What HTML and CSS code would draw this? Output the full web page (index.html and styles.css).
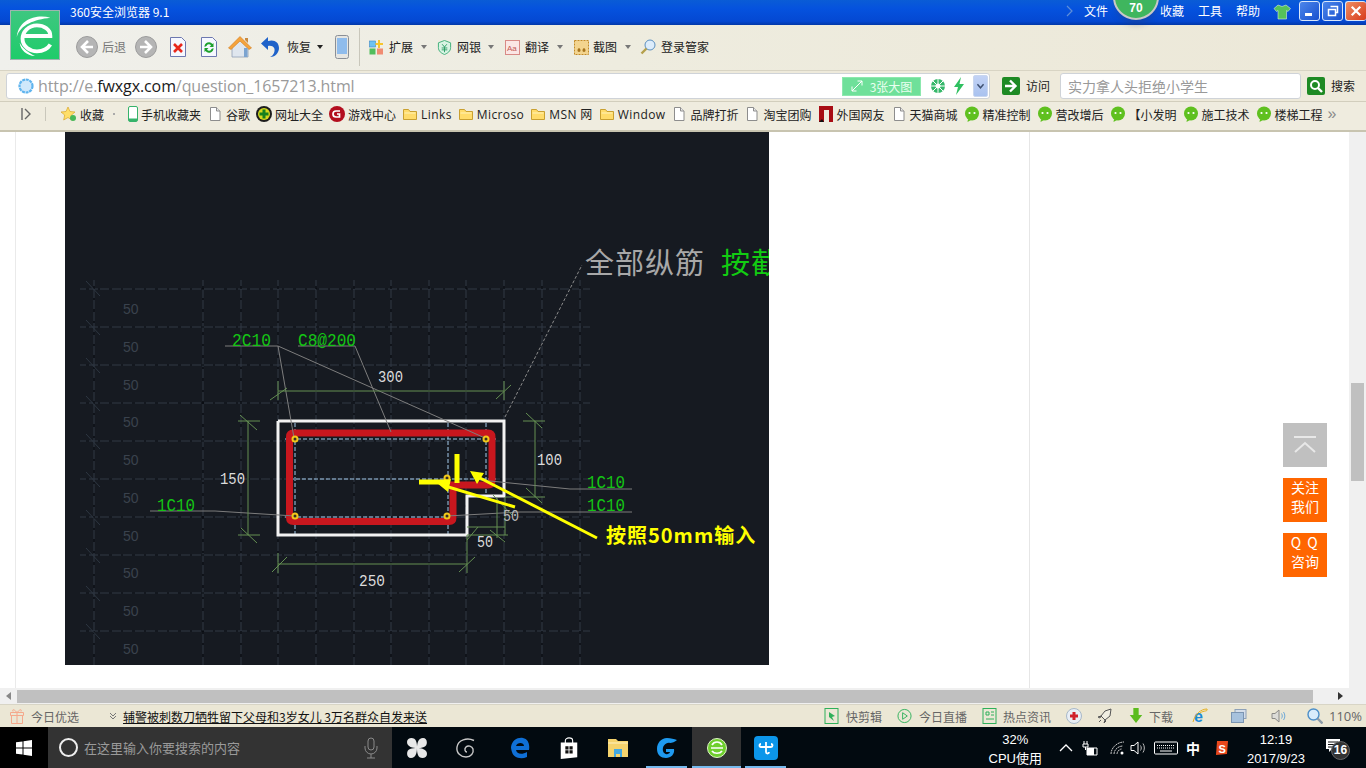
FILE: index.html
```html
<!DOCTYPE html>
<html lang="zh-CN">
<head>
<meta charset="utf-8">
<title>360安全浏览器 9.1</title>
<link rel="stylesheet" href="styles.css">
</head>
<body>
<svg class="sprite" aria-hidden="true">
  <symbol id="doc" viewBox="0 0 16 16"><path d="M3.5 1.500h6l3.500 3.500v9.500h-9.500z" fill="#fff" stroke="#8d8d8d"/><path d="M9.500 1.500v3.500h3.500" fill="#e8e8e8" stroke="#8d8d8d"/></symbol>
  <symbol id="folder" viewBox="0 0 16 16"><path d="M1.500 3.500h5l1.500 2h6.500v8h-13z" fill="#ffdc6b" stroke="#c9a030"/><path d="M2.500 6.500h11v1h-11z" fill="#fff2b8"/></symbol>
  <symbol id="chat" viewBox="0 0 16 16"><circle cx="8" cy="7.500" r="7" fill="#5fc01f"/><path d="M4 13l-.5 3 3.500-2z" fill="#5fc01f"/><circle cx="5.500" cy="7" r="1.100" fill="#fff"/><circle cx="10.500" cy="7" r="1.100" fill="#fff"/></symbol>
  <symbol id="gridlines" viewBox="65 132 704 533">
    <path d="M80 289H590M80 327H590M80 365H590M80 403H590M80 441H590M80 479H590M80 517H590M80 555H590M80 593H590M80 631H590"/>
    <path d="M94 280V665M203 280V665M241 280V665M278 280V665M316 280V665M354 280V665M391 280V665M429 280V665M466 280V665M504 280V665M542 280V665M580 280V665"/>
  </symbol>
</svg>

<div class="browser">
  <header class="titlebar">
    <span class="app-title">360安全浏览器 9.1</span>
    <nav class="menu">
      <svg class="menu-chev" viewBox="0 0 8 12"><path d="M1 1l5 5-5 5" fill="none" stroke="#5f8fd8" stroke-width="1.200"/></svg>
      <span class="menu-file">文件</span>
      <span class="menu-fav">收藏</span>
      <span class="menu-tools">工具</span>
      <span class="menu-help">帮助</span>
      <svg class="shirt" viewBox="0 0 18 16"><path d="M5 1l4 1.500L13 1l4.500 3.500-2.500 3-1.500-1V15H5V6.500L3.500 7.500 1 4.500z" fill="#55c25a" stroke="#d8f0d8" stroke-width=".6"/></svg>
      <span class="win-btn win-min"><i class="min-bar"></i></span>
      <span class="win-btn win-max"><svg viewBox="0 0 12 12"><path d="M3.500 1.500h7v6h-2M1.500 4.500h7v6h-7z" fill="none" stroke="#fff" stroke-width="1.500"/></svg></span>
      <span class="win-btn win-close"><svg viewBox="0 0 14 14"><path d="M2 2l10 10M12 2L2 12" stroke="#fff" stroke-width="2.600"/></svg></span>
    </nav>
  </header>

  <div class="score"><span class="score-num">70</span></div>

  <div class="logo">
    <svg viewBox="0 0 50 50"><path d="M13 26H41C41 19 34 15 27 15 18 15 12 22 12 29 12 37 20 42 27 42 33 42 38 40 41 35" fill="none" stroke="#fff" stroke-width="4"/><path d="M41 7C26 3 8 9 6 27 10 14 24 9 41 7zM9 33C10 41 16 46 25 47 18 43 12 39 9 33z" fill="#fff"/></svg>
  </div>

  <div class="toolbar">
    <svg class="ic22" viewBox="0 0 22 22"><circle cx="11" cy="11" r="10.500" fill="#b5b5b5" stroke="#9c9c9c"/><path d="M12 5l-6 6 6 6M6 11h11" fill="none" stroke="#fff" stroke-width="2.600"/></svg>
    <span class="tb-text muted m4">后退</span>
    <svg class="ic22 m9" viewBox="0 0 22 22"><circle cx="11" cy="11" r="10.500" fill="#b5b5b5" stroke="#9c9c9c"/><path d="M10 5l6 6-6 6M16 11H5" fill="none" stroke="#fff" stroke-width="2.600"/></svg>
    <svg class="ic16x20 m13" viewBox="0 0 16 20"><path d="M.5.500h11l4 4v15H.5z" fill="#f6f8ff" stroke="#6d78b0"/><path d="M4 7l8 8M12 7l-8 8" stroke="#e8281c" stroke-width="2.600"/></svg>
    <svg class="ic16x20 m15" viewBox="0 0 16 20"><path d="M.5.500h11l4 4v15H.5z" fill="#f6f8ff" stroke="#6d78b0"/><path d="M3.500 10a4.500 4.500 0 0 1 8-3l1-1v4h-4l1.500-1.500a2.500 2.500 0 0 0-4.500.5z M12.500 11a4.500 4.500 0 0 1-8 3l-1 1v-4h4L6 12.500a2.500 2.500 0 0 0 4.500-.5z" fill="#1ca02c"/></svg>
    <svg class="ic24 m11" viewBox="0 0 24 24"><path d="M4 12v10h16V12l-8-7z" fill="#dfe6ee" stroke="#8fa0b5" stroke-width=".8"/><path d="M.5 13L12 1.500 23.500 13 21 14.500 12 6 3 14.500z" fill="#f5a33c" stroke="#d07a18" stroke-width=".6"/><path d="M16 13h3.500v9H16z" fill="#7ca4d0"/><path d="M17 3h3v5l-3-3z" fill="#c98a40"/></svg>
    <svg class="ic21 m7" viewBox="0 0 21 22"><path d="M9 1L2 7.500 9 14v-4c5-1 8 2 6 7-1 2-2 3-4 4 6 0 9-5 9-9 0-6-5-9-11-7z" fill="#1f62c9"/></svg>
    <span class="tb-text m7">恢复</span>
    <i class="caret m6"></i>
    <svg class="ic14x24 m12" viewBox="0 0 14 24"><rect x=".5" y=".5" width="13" height="23" rx="2" fill="#e6e6e2" stroke="#8a8f96"/><rect x="2" y="3" width="10" height="16" fill="#8fbcec"/></svg>
    <i class="tb-sep m10"></i>
    <svg class="ic15 m9" viewBox="0 0 15 15"><rect x=".5" y="1" width="6" height="6" fill="#6ec2f2" stroke="#3a87c5" stroke-width=".6"/><path d="M11 0v3h3v2h-3v3H9V5H6.500V3H9V0z" fill="#f7c52d"/><rect x=".5" y="8.500" width="6" height="6" fill="#52bd5c"/><rect x="8" y="8.500" width="6" height="6" fill="#f08c72"/></svg>
    <span class="tb-text m5">扩展</span>
    <i class="caret grey m8"></i>
    <svg class="ic15 m10" viewBox="0 0 15 16"><path d="M7.500.500l6.500 2.500v5c0 4-3 6-6.500 7.500C4 14 1 12 1 8V3z" fill="#d8f3e3" stroke="#3dae77"/><path d="M5 4.500l2.500 3 2.500-3M4.500 8.500h6M4.500 10.500h6M7.500 7.500V13" fill="none" stroke="#2c9d65"/></svg>
    <span class="tb-text m5">网银</span>
    <i class="caret grey m7"></i>
    <svg class="ic15 m11" viewBox="0 0 15 15"><rect x=".5" y=".5" width="14" height="14" fill="#fbe6e4" stroke="#d88a86"/><text class="aa" x="2" y="11">Aa</text></svg>
    <span class="tb-text m5">翻译</span>
    <i class="caret grey m8"></i>
    <svg class="ic15 m11" viewBox="0 0 15 15"><rect x=".5" y=".5" width="14" height="14" fill="#f3d48e" stroke="#c38a24" stroke-dasharray="2 1"/><path d="M5 8c-2 1-2 4 0 4s2-3 0-4zm5 0c-2 1-2 4 0 4s2-3 0-4z" fill="#a7741d"/></svg>
    <span class="tb-text m4">截图</span>
    <i class="caret grey m8"></i>
    <svg class="ic16 m9" viewBox="0 0 16 16"><circle cx="10" cy="6" r="5" fill="#dcecfb" stroke="#5b8fbf"/><path d="M6.500 9.500l-5 5" stroke="#b5a04c" stroke-width="2.400"/></svg>
    <span class="tb-text m5">登录管家</span>
  </div>

  <div class="addrbar">
    <div class="url-box">
      <svg class="ic16" viewBox="0 0 16 16"><circle cx="8" cy="8" r="6.500" fill="#cfe8fb" stroke="#5fb4ee" stroke-width="2.200" stroke-dasharray="3 .7"/></svg>
      <span class="url"><span>http://e.</span><b class="url-host">fwxgx.com</b><span>/question_1657213.html</span></span>
      <span class="big-pic">
        <svg class="ic12" viewBox="0 0 12 12"><path d="M1 11l10-10M6.500 1H11v4.500M1 6.500V11h4.500" fill="none" stroke="#fff"/></svg>
        <span>3张大图</span>
      </span>
      <svg class="ic16 m9" viewBox="0 0 16 16"><circle cx="8" cy="8" r="7" fill="#35b86a"/><circle cx="8" cy="8" r="2.500" fill="#fff"/><path d="M8 1v5M15 8h-5M8 15v-5M1 8h5M3 3l3.500 3.500M13 3L9.500 6.500M13 13L9.500 9.500M3 13l3.500-3.500" stroke="#fff"/></svg>
      <svg class="ic12x18 m7" viewBox="0 0 12 18"><path d="M8 0L1 10h4l-2 8 8-11H6.500z" fill="#2fc060"/></svg>
      <span class="addr-drop"><svg viewBox="0 0 10 8"><path d="M1.500 1.500L5 5.500l3.500-4" fill="none" stroke="#3d4f70" stroke-width="1.600"/></svg></span>
    </div>
    <svg class="go-ic" viewBox="0 0 18 18"><rect width="18" height="18" rx="2" fill="#1e8a24"/><path d="M3 9h9M8 3.500L13.500 9 8 14.500" fill="none" stroke="#fff" stroke-width="2.400"/></svg>
    <span class="tb-text m6">访问</span>
    <span class="search-box">实力拿人头拒绝小学生</span>
    <svg class="go-ic m6" viewBox="0 0 18 18"><rect width="18" height="18" rx="2" fill="#1e8a24"/><circle cx="8" cy="8" r="4" fill="none" stroke="#fff" stroke-width="2"/><path d="M11 11l4 4" stroke="#fff" stroke-width="2.400"/></svg>
    <span class="tb-text m6">搜索</span>
  </div>

  <div class="favbar">
    <svg class="fav-toggle" viewBox="0 0 10 12"><path d="M1 0v12" stroke="#666" stroke-width="1.400"/><path d="M4 1l5 5-5 5" fill="none" stroke="#666" stroke-width="1.400"/></svg>
    <i class="fav-sep"></i>
    <span class="fav fav-star"><svg class="ic16" viewBox="0 0 16 16"><path d="M7 1l2 4.500 5 .5-3.700 3.200 1 5L7 11.500 2.700 14l1-5L0 6l5-.5z" fill="#ffdf6a" stroke="#d9a62a" stroke-width=".7"/><circle cx="12" cy="12" r="3" fill="#48b85a"/></svg>收藏</span>
    <i class="fav-dot"></i>
    <span class="fav fav-phone"><svg class="ic10x16" viewBox="0 0 10 16"><rect x=".5" y=".5" width="9" height="15" rx="1.500" fill="#fff" stroke="#36b36a"/><path d="M1 12.500h8V15H1z" fill="#36b36a"/></svg>手机收藏夹</span>
    <span class="fav"><svg class="ic16"><use href="#doc"/></svg>谷歌</span>
    <span class="fav"><svg class="ic16" viewBox="0 0 16 16"><circle cx="8" cy="8" r="8" fill="#1d1d1d"/><circle cx="8" cy="8" r="6" fill="#d6d81d"/><path d="M6.500 3.500h3v3h3v3h-3v3h-3v-3h-3v-3h3z" fill="#17801e"/></svg>网址大全</span>
    <span class="fav"><svg class="ic16" viewBox="0 0 16 16"><circle cx="8" cy="8" r="8" fill="#b30e1e"/><path d="M11 5H7a3 3 0 0 0 0 6h3.500V8H8" fill="none" stroke="#fff" stroke-width="1.700"/></svg>游戏中心</span>
    <span class="fav fav-latin"><svg class="ic16"><use href="#folder"/></svg>Links</span>
    <span class="fav fav-latin"><svg class="ic16"><use href="#folder"/></svg>Microso</span>
    <span class="fav fav-latin"><svg class="ic16"><use href="#folder"/></svg>MSN 网</span>
    <span class="fav fav-latin"><svg class="ic16"><use href="#folder"/></svg>Window</span>
    <span class="fav"><svg class="ic16"><use href="#doc"/></svg>品牌打折</span>
    <span class="fav"><svg class="ic16"><use href="#doc"/></svg>淘宝团购</span>
    <span class="fav"><svg class="ic16" viewBox="0 0 16 16"><path d="M1 0h14v16h-4V4H6v12H1z" fill="#a80d14"/><path d="M1 16l3-3 2 3z" fill="#111"/></svg>外国网友</span>
    <span class="fav"><svg class="ic16"><use href="#doc"/></svg>天猫商城</span>
    <span class="fav"><svg class="ic16"><use href="#chat"/></svg>精准控制</span>
    <span class="fav"><svg class="ic16"><use href="#chat"/></svg>营改增后</span>
    <span class="fav"><svg class="ic16"><use href="#chat"/></svg>【小发明</span>
    <span class="fav"><svg class="ic16"><use href="#chat"/></svg>施工技术</span>
    <span class="fav"><svg class="ic16"><use href="#chat"/></svg>楼梯工程</span>
    <span class="fav-more">»</span>
  </div>

  <main class="viewport">
    <div class="page">
      <div class="page-main">
        <svg class="cad" viewBox="65 132 704 533" width="704" height="533">
          <use class="grid-base" href="#gridlines" x="65" y="132" width="704" height="533"/>
          <use class="grid-dash" href="#gridlines" x="65" y="132" width="704" height="533"/>
          <path class="grid-tick" d="M86 281L100 296M86 320L100 335M86 358L100 373M86 396L100 411M86 434L100 449M86 472L100 487M86 510L100 525M86 548L100 563M86 586L100 601M86 624L100 639"/>
          <g class="grid-label">
            <text x="123" y="314">50</text><text x="123" y="352">50</text><text x="123" y="390">50</text><text x="123" y="427">50</text><text x="123" y="465">50</text><text x="123" y="503">50</text><text x="123" y="541">50</text><text x="123" y="578">50</text><text x="123" y="616">50</text><text x="123" y="654">50</text>
          </g>

          <path class="leader-dash" d="M505 417L582 265"/>
          <path class="inner-dash" d="M295 423V535M448 423V536M486 423V498M285 439H496M290 479H496M285 517H456"/>

          <polyline class="outline" points="278,421 504,421 504,496 467,496 467,535 278,535 278,421"/>
          <path class="rebar" d="M450 485H488Q492 485 492 481V437Q492 433 488 433H293.500Q289.500 433 289.500 437V517.500Q289.500 521.500 293.500 521.500H449Q453 521.500 453 517.500V485"/>

          <path class="leader" d="M225 346H278L294 438M278 346L485 438M298 346H355L391 432M150 511H215L295 516M632 489H570L480 480M632 512H520L447 516"/>
          <path class="dim" d="M278 391H504M278 381V400M504 381V400M270 400L287 388M496 399L511 385M248 421V535M238 421H260M238 535H260M240 415L257 430M241 528L257 543M278 564H467M278 553V573M467 535V573M272 572L287 557M459 572L475 557M535 421V497M523 421H545M505 497H545M526 413L542 428M526 488L542 503M467 527H505M467 535H508M497 498V538M505 497V535M490 530L505 542M493 495L512 515M467 540L478 527"/>

          <g class="marks">
            <circle cx="295" cy="439" r="2.500"/><circle cx="486" cy="439" r="2.500"/><circle cx="447" cy="478" r="2.500"/><circle cx="447" cy="516" r="2.500"/><circle cx="295" cy="516" r="2.500"/>
          </g>

          <text class="cad-dim" x="378" y="382" textLength="25" lengthAdjust="spacingAndGlyphs">300</text>
          <text class="cad-dim" x="220" y="484" textLength="25" lengthAdjust="spacingAndGlyphs">150</text>
          <text class="cad-dim" x="537" y="465" textLength="25" lengthAdjust="spacingAndGlyphs">100</text>
          <text class="cad-dim" x="359" y="586" textLength="26" lengthAdjust="spacingAndGlyphs">250</text>
          <text class="cad-dim" x="477" y="547" textLength="16" lengthAdjust="spacingAndGlyphs">50</text>
          <text class="cad-dim dim-soft" x="503" y="521" textLength="16" lengthAdjust="spacingAndGlyphs">50</text>
          <text class="cad-green" x="232" y="346" textLength="39" lengthAdjust="spacingAndGlyphs">2C10</text>
          <text class="cad-green" x="298" y="346" textLength="58" lengthAdjust="spacingAndGlyphs">C8@200</text>
          <text class="cad-green" x="157" y="511" textLength="38" lengthAdjust="spacingAndGlyphs">1C10</text>
          <text class="cad-green" x="587" y="488" textLength="38" lengthAdjust="spacingAndGlyphs">1C10</text>
          <text class="cad-green" x="587" y="511" textLength="38" lengthAdjust="spacingAndGlyphs">1C10</text>
          <text class="cad-big" x="585" y="274">全部纵筋</text>
          <text class="cad-big green" x="721" y="274">按截面</text>

          <path class="arrow-bar" d="M457 454V483M419 482H448"/>
          <path class="arrow-line" d="M515 507L445 486M597 538L480 478"/>
          <path class="arrow-head" d="M437 483L451 479 448 492zM470 471L484 473 477 484z"/>
          <text class="cad-note" x="606" y="543">按照50mm输入</text>
        </svg>
      </div>
      <aside class="page-side"></aside>
      <div class="float-rail">
        <span class="float-top"><svg viewBox="0 0 24 18"><path d="M1 1h22M2 16l10-9 10 9" fill="none" stroke="#e8e8e8" stroke-width="2"/></svg></span>
        <span class="float-btn">关注<br>我们</span>
        <span class="float-btn"><span class="float-qq">Q Q</span><br>咨询</span>
      </div>
    </div>
    <div class="vscroll"><i class="vthumb"></i></div>
  </main>

  <div class="hscroll">
    <svg class="harrow" viewBox="0 0 5 8"><path d="M5 0v8L0 4z" fill="#888"/></svg>
    <i class="hthumb"></i>
    <svg class="harrow" viewBox="0 0 5 8"><path d="M0 0v8l5-4z" fill="#333"/></svg>
  </div>

  <footer class="statusbar">
    <svg class="ic16 st-gift" viewBox="0 0 16 16"><path d="M1.500 4.500h13v3h-13zM2.500 7.500h11v8h-11zM8 4.500v11M8 4.500C5 1 3 1 4 3.500M8 4.500c3-3.500 5-3.500 4-1" fill="none" stroke="#f5a88c"/></svg>
    <span class="st-text m6">今日优选</span>
    <svg class="st-chev" viewBox="0 0 8 8"><path d="M1 1l3 3 3-3M1 4l3 3 3-3" fill="none" stroke="#777"/></svg>
    <a class="news">辅警被刺数刀牺牲留下父母和3岁女儿 3万名群众自发来送</a>
    <span class="st-spacer"></span>
    <svg class="ic14" viewBox="0 0 15 16"><rect x="1" y=".5" width="13" height="15" fill="none" stroke="#2eb05a"/><path d="M5 4l6 4-3 1 2 4-5-4z" fill="#2eb05a"/></svg>
    <span class="st-text m7">快剪辑</span>
    <svg class="ic14 m15" viewBox="0 0 16 16"><circle cx="8" cy="8" r="7" fill="none" stroke="#2eb05a"/><path d="M6 4.500v7l5-3.500z" fill="none" stroke="#2eb05a"/></svg>
    <span class="st-text m7">今日直播</span>
    <svg class="ic14 m15" viewBox="0 0 15 16"><rect x="1" y=".5" width="13" height="15" fill="none" stroke="#2eb05a"/><path d="M4 4h3v3H4zM9 4h3M9 7h3M4 11h8" fill="none" stroke="#2eb05a"/></svg>
    <span class="st-text m6">热点资讯</span>
    <svg class="ic16 m15" viewBox="0 0 16 16"><circle cx="8" cy="8" r="7.500" fill="#e8eef5" stroke="#a8b8c8"/><path d="M6.500 4h3v2.500H12v3H9.500V12h-3V9.500H4v-3h2.500z" fill="#d0202c"/></svg>
    <svg class="ic16 m15" viewBox="0 0 16 16"><path d="M14 1L8 3 4 8l4 4 5-4zM4 8L1 9l2 1zM8 12l-1 3 2-2zM4 12l-2 2" fill="#f0eee2" stroke="#555"/></svg>
    <svg class="ic16 m15" viewBox="0 0 14 18"><path d="M4 0h6v8h4l-7 9-7-9h4z" fill="#5cbc1e"/></svg>
    <span class="st-text m5">下载</span>
    <svg class="ic16 m19" viewBox="0 0 16 16"><text class="ie" x="2" y="14">e</text><path d="M1 14C3 6 9 1 15 1c1 3-3 1-7 4" fill="none" stroke="#e6b020"/></svg>
    <svg class="ic16 m23" viewBox="0 0 16 14"><rect x="4" y=".5" width="11" height="9" fill="#d5dee9" stroke="#8ea1b8"/><rect x=".5" y="3.500" width="12" height="10" fill="#a7c2dd" stroke="#7b95b2"/></svg>
    <svg class="ic16 m24" viewBox="0 0 16 16"><path d="M1 5.500h3l4-3.500v12l-4-3.500H1z" fill="#dcdcd8" stroke="#8a8a88"/><path d="M10.500 5.500c1 1.500 1 3.500 0 5M12.500 4c1.800 2.500 1.800 5.500 0 8" fill="none" stroke="#6fa9d8"/></svg>
    <svg class="ic16 m20" viewBox="0 0 16 16"><circle cx="6.500" cy="6.500" r="5.500" fill="#d8ecfb" stroke="#4d8fc8" stroke-width="1.400"/><path d="M10.500 10.500l5 5" stroke="#8b9ba8" stroke-width="2.400"/></svg>
    <span class="st-text zoom-val">110%</span>
  </footer>

  <div class="taskbar">
    <span class="start"><svg viewBox="0 0 16 16"><path d="M0 2.300L6.500 1.400V7.500H0zM7.500 1.300L16 0V7.500H7.500zM0 8.500H6.500v6.100L0 13.700zM7.500 8.500H16V16L7.500 14.700z" fill="#fff"/></svg></span>
    <div class="cortana">
      <i class="cortana-ring"></i>
      <span class="cortana-text">在这里输入你要搜索的内容</span>
      <svg class="mic" viewBox="0 0 14 22"><rect x="4" y="1" width="6" height="12" rx="3" fill="none" stroke="#8a8a8a"/><path d="M1 9v2a6 6 0 0 0 12 0V9M7 17v4M3 21h8" fill="none" stroke="#8a8a8a"/></svg>
    </div>
    <span class="task"><svg class="ic22" viewBox="0 0 22 22"><path d="M1 5c0-5 8-5 9-1 1 2 1 5 1 7-4 0-10-1-10-6zM17 1c5 0 5 8 1 9-2 1-5 1-7 1 0-4 1-10 6-10zM21 17c0 5-8 5-9 1-1-2-1-5-1-7 4 0 10 1 10 6zM5 21c-5 0-5-8-1-9 2-1 5-1 7-1 0 4-1 10-6 10z" fill="#e8e8e8"/></svg></span>
    <span class="task"><svg class="ic22" viewBox="0 0 22 22"><path d="M19 3.500C12 0 3 3 2 10c-1 6 4 10 9 10 5 0 8-4 7-8-1-3-5-4-7-2-2 2-1 5 1 5" fill="none" stroke="#c8c8c8" stroke-width="1.400"/></svg></span>
    <span class="task m5"><svg class="ic22" viewBox="0 0 22 22"><path d="M2 10C3 3 9 0 14 1c5 1 7 6 6 12H7c.5 4 6 5 11 2v5c-7 3-14 0-15-5 0 0-1-3-1-5zm5-1h8c0-4-7-4-8 0z" fill="#0f6fd6"/></svg></span>
    <span class="task"><svg class="ic22" viewBox="0 0 20 24"><path d="M1 6h18v16L1 24z" fill="#fff"/><path d="M6 7V4c0-4 8-4 8 0v3" fill="none" stroke="#fff" stroke-width="1.200"/><path d="M6 10h3.500v3.500H6zM10.500 10H14v3.500h-3.500zM6 14.500h3.500V18H6zM10.500 14.500H14V18h-3.500z" fill="#111"/></svg></span>
    <span class="task"><svg class="ic22" viewBox="0 0 22 20"><path d="M1 1h8l2 2h10v16H1z" fill="#f5d36c"/><path d="M1 5h20" stroke="#fff2c0"/><path d="M7 11h8v8h-2v-3H9v3H7z" fill="#45a9e0"/></svg></span>
    <span class="task task-open"><svg class="ic22" viewBox="0 0 22 22"><path d="M21 3c-3-1-6-2-10-2C5 1 1 6 1 12s4 9 9 9 9-4 8-9h-8v3h4c-1 3-6 3-7-1-1-5 3-9 7-8 2 0 5-1 7-3z" fill="#1e9af0"/></svg></span>
    <span class="task task-active"><svg class="ic22" viewBox="0 0 22 22"><circle cx="11" cy="11" r="9.500" fill="#6fcf2e" stroke="#dff5c8"/><path d="M5 11h12M6 8c2-4 8-4 10 0M6 14c2 3 8 3 10 0" fill="none" stroke="#fff" stroke-width="1.700"/></svg></span>
    <span class="task task-open"><span class="tile"><svg class="ic16" viewBox="0 0 16 16"><path d="M8 2v10M3 7h10M8 12c0 2 3 2 3 0M3 7c-2 0-2-3 0-3M13 7c2 0 2-3 0-3" fill="none" stroke="#fff" stroke-width="1.800"/></svg></span></span>
    <span class="tray-spacer"></span>
    <div class="tray-stack cpu"><span>32%</span><span>CPU使用</span></div>
    <svg class="tray-ic caret-up" viewBox="0 0 14 8"><path d="M1 7l6-6 6 6" fill="none" stroke="#fff" stroke-width="1.300"/></svg>
    <svg class="tray-ic batt" viewBox="0 0 18 16"><path d="M3 1v3M6 1v3M2 4h5v3H2zM4.500 7v3M6 8h10v7H6z" fill="none" stroke="#fff"/><path d="M6 8h7v7H6z" fill="#fff"/></svg>
    <svg class="tray-ic wifi" viewBox="0 0 16 16"><path d="M1 14C1 8 7 2 14 2M4 14c0-4 4-8 9-8M7 14c0-2 2-5 5-5" fill="none" stroke="#c8c8c8" stroke-dasharray="2 .6"/><circle cx="12" cy="13" r="1.500" fill="#fff"/></svg>
    <svg class="tray-ic vol" viewBox="0 0 16 16"><path d="M1 5.500h3l4-3.500v12l-4-3.500H1z" fill="none" stroke="#fff"/><path d="M10.500 5.500c1 1.500 1 3.500 0 5M13 3.500c1.800 2.800 1.800 6.200 0 9" fill="none" stroke="#bbb"/></svg>
    <svg class="tray-ic kbd" viewBox="0 0 24 13"><rect x=".5" y=".5" width="23" height="12" rx="1" fill="none" stroke="#fff"/><path d="M3 4h18M3 6.500h18" stroke="#fff" stroke-dasharray="1 1"/><path d="M6 9.500h12" stroke="#fff"/></svg>
    <span class="ime">中</span>
    <svg class="tray-ic sogou" viewBox="0 0 16 16"><path d="M3 1h11l-1 13-11 1z" fill="#e8481c"/><text class="sogou-s" x="4.500" y="12.500">S</text></svg>
    <div class="tray-stack clock"><span>12:19</span><span>2017/9/23</span></div>
    <span class="notify">
      <svg viewBox="0 0 16 14"><path d="M1 0h14v10H7l-3 3v-3H1z" fill="#fff"/><path d="M3 3h10M3 5.500h10M3 8h10" stroke="#111"/></svg>
      <b class="notify-badge">16</b>
    </span>
  </div>
</div>
</body>
</html>
```

FILE: styles.css
```css
* { box-sizing: border-box; }
html, body { margin: 0; padding: 0; }
body {
  width: 1366px;
  height: 768px;
  overflow: hidden;
  font-family: "Noto Sans CJK SC", "Liberation Sans", sans-serif;
  font-size: 12px;
  color: #222;
  background: #fff;
}
i { display: block; font-style: normal; }
svg { display: block; flex: none; overflow: hidden; }
.sprite { position: absolute; width: 0; height: 0; }

.browser { position: relative; display: flex; flex-direction: column; height: 768px; }

.m4 { margin-left: 4px; } .m5 { margin-left: 5px; } .m6 { margin-left: 6px; } .m7 { margin-left: 7px; }
.m8 { margin-left: 8px; } .m9 { margin-left: 9px; } .m10 { margin-left: 10px; } .m11 { margin-left: 11px; }
.m12 { margin-left: 12px; } .m13 { margin-left: 13px; } .m15 { margin-left: 15px; } .m19 { margin-left: 19px; }
.m20 { margin-left: 20px; } .m23 { margin-left: 23px; } .m24 { margin-left: 24px; }

.ic12 { width: 12px; height: 12px; }
.ic14 { width: 15px; height: 16px; }
.ic15 { width: 15px; height: 15px; }
.ic16 { width: 16px; height: 16px; }
.ic21 { width: 21px; height: 22px; }
.ic22 { width: 22px; height: 22px; }
.ic24 { width: 24px; height: 24px; }
.ic10x16 { width: 10px; height: 16px; margin-right: 3px; }
.ic12x18 { width: 12px; height: 18px; }
.ic14x24 { width: 14px; height: 24px; }
.ic16x20 { width: 16px; height: 20px; }

/* title bar */
.titlebar {
  height: 25px;
  flex: none;
  display: flex;
  align-items: flex-start;
  background: linear-gradient(#0a5cd6 0, #0552de 35%, #0448d2 85%, #0238a8 100%);
  color: #fff;
}
.app-title { margin-left: 70px; line-height: 24px; }
.menu { margin-left: auto; display: flex; align-items: flex-start; line-height: 22px; }
.menu-chev { width: 8px; height: 12px; margin-top: 5px; margin-right: 10px; }
.menu-fav { margin-left: 52px; }
.menu-tools, .menu-help { margin-left: 14px; }
.shirt { width: 18px; height: 16px; margin: 4px 6px 0 13px; }
.win-btn {
  width: 21px;
  height: 20px;
  margin-top: 1px;
  margin-left: 2px;
  border: 1px solid #d8e6fa;
  border-radius: 3px;
  background: linear-gradient(135deg, #4c86ea, #1850cf);
  display: flex;
  align-items: center;
  justify-content: center;
}
.win-btn svg { width: 12px; height: 12px; }
.min-bar { width: 7px; height: 3px; background: #fff; margin-top: 7px; margin-right: 2px; }
.win-close { background: linear-gradient(135deg, #ee8e62, #d83a1c); border-right: 0; }

.score {
  position: absolute;
  left: 1113px;
  top: -26px;
  width: 46px;
  height: 46px;
  border-radius: 50%;
  background: #3fb65e;
  border: 2px solid #c8c8c8;
  box-shadow: 0 6px 6px -2px rgba(40, 60, 110, .35);
  display: flex;
  align-items: flex-end;
  justify-content: center;
  color: #fff;
  font-weight: 700;
  font-family: "Liberation Sans", sans-serif;
  font-size: 12px;
  line-height: 18px;
}
.score-num { margin-bottom: 1px; }

.logo {
  position: absolute;
  left: 10px;
  top: 10px;
  width: 50px;
  height: 50px;
  background: linear-gradient(#3ec780, #1fcc6a);
  border: 1px solid #9fb5b0;
}
.logo svg { width: 48px; height: 48px; }

/* toolbar */
.toolbar {
  height: 45px;
  flex: none;
  display: flex;
  align-items: center;
  padding-left: 76px;
  padding-bottom: 1px;
  background: linear-gradient(90deg, #f0f0ec 0, #eeecdf 45%, #ece8d8 100%);
}
.tb-text { white-space: nowrap; line-height: 16px; }
.muted { color: #777; }
.caret { height: 0; border: 3px solid transparent; border-top: 4px solid #222; border-bottom: 0; width: 6px; }
.caret.grey { border-top-color: #777; }
.tb-sep { width: 1px; height: 38px; background: #c9c7bb; }
.aa { font: 8px "Liberation Sans", sans-serif; fill: #c45a54; }

/* address */
.addrbar {
  height: 32px;
  flex: none;
  display: flex;
  align-items: center;
  padding-left: 6px;
  background: #eeeadb;
  border-top: 1px solid #d8d4c4;
  border-bottom: 1px solid #d2cebd;
}
.url-box {
  width: 984px;
  height: 26px;
  display: flex;
  align-items: center;
  padding-left: 11px;
  padding-right: 1px;
  background: #fff;
  border: 1px solid #cfd3d8;
  border-radius: 3px;
}
.url {
  margin-left: 4px;
  font: 16px "Open Sans", "Liberation Sans", sans-serif;
  color: #9a9a9a;
  white-space: nowrap;
  letter-spacing: -.1px;
}
.url-host { font-weight: 400; color: #1a1a1a; }
.big-pic {
  margin-left: auto;
  width: 79px;
  height: 19px;
  display: flex;
  align-items: center;
  justify-content: center;
  gap: 7px;
  background: #6fe09a;
  color: #e9fff0;
  border: 1px solid #8ce8ae;
}
.addr-drop {
  width: 15px;
  height: 22px;
  margin-left: 8px;
  background: linear-gradient(#c2d2f5, #a9c2ef);
  border: 1px solid #c8d6ef;
  border-radius: 2px;
  display: flex;
  align-items: center;
  justify-content: center;
}
.addr-drop svg { width: 9px; height: 7px; }
.go-ic { width: 18px; height: 18px; margin-left: 12px; }
.go-ic.m6 { margin-left: 6px; }
.search-box {
  width: 241px;
  height: 26px;
  margin-left: 10px;
  padding-left: 7px;
  background: #fff;
  border: 1px solid #cfd3d8;
  border-radius: 3px;
  color: #999;
  font-size: 14px;
  line-height: 24px;
}

/* favorites */
.favbar {
  height: 30px;
  flex: none;
  display: flex;
  align-items: center;
  padding-left: 21px;
  padding-bottom: 4px;
  background: #efecdf;
  border-bottom: 2px solid #c8c4b0;
  white-space: nowrap;
}
.fav-toggle { width: 10px; height: 12px; }
.fav-sep { width: 1px; height: 14px; background: #c9c7bb; margin-left: 14px; }
.fav { display: flex; align-items: center; gap: 3px; margin-left: 6px; }
.fav-star { margin-left: 15px; }
.fav-latin { font-family: "Open Sans", "Noto Sans CJK SC", sans-serif; letter-spacing: .4px; }
.fav-dot { width: 2px; height: 2px; background: #aaa; margin-left: 9px; }
.fav-phone { margin-left: 13px; gap: 0; }
.fav-more { margin-left: 5px; font-size: 16px; line-height: 16px; color: #8a8a8a; font-family: "Liberation Sans", sans-serif; }

/* page */
.viewport { flex: 1; min-height: 0; display: flex; }
.page { position: relative; flex: 1; min-width: 0; display: flex; background: #fff; }
.page-main { width: 1014px; height: 100%; margin-left: 15px; padding-left: 49px; border-left: 1px solid #eaeaea; }
.cad { background: #161a21; }
.page-side { flex: 1; border-left: 1px solid #e6e6e6; }
.vscroll { width: 17px; background: #f0f0f0; padding: 251px 2px 0; }
.vthumb { width: 13px; height: 98px; background: #c0c0c0; }

.grid-base { fill: none; stroke: #303945; stroke-width: 1; }
.grid-dash { fill: none; stroke: #04060a; stroke-width: 1.200; stroke-dasharray: 3 9 2 9; stroke-dashoffset: -6; }
.grid-tick { fill: none; stroke: #2d3641; stroke-width: 1; }
.grid-label text { font: 14px "Liberation Sans", sans-serif; fill: #3a424d; }
.leader-dash { fill: none; stroke: #8c8c8c; stroke-width: 1; stroke-dasharray: 3 2; }
.inner-dash { fill: none; stroke: #a4cbec; stroke-width: 1; stroke-dasharray: 4 2; }
.outline { fill: none; stroke: #f2f2f2; stroke-width: 3; }
.rebar { fill: none; stroke: #c8171e; stroke-width: 7; }
.leader { fill: none; stroke: #7d7d7d; stroke-width: 1; }
.dim { fill: none; stroke: #648f52; stroke-width: 1; }
.marks circle { fill: #3a3020; stroke: #f2c81a; stroke-width: 2; }
.cad-dim { font: 17px "Liberation Mono", monospace; fill: #dcdcdc; }
.dim-soft { fill: #b8b8b8; }
.cad-green { font: 19px "Liberation Mono", monospace; fill: #14c414; }
.cad-big { font-size: 29px; fill: #a8a8a8; letter-spacing: 1px; }
.cad-big.green { fill: #12cc12; }
.arrow-bar { fill: none; stroke: #ffff00; stroke-width: 5; }
.arrow-line { fill: none; stroke: #ffff00; stroke-width: 3; }
.arrow-head { fill: #ffff00; }
.cad-note { font-size: 20px; font-weight: 700; fill: #ffff00; letter-spacing: 1px; }

.float-rail {
  position: absolute;
  left: 1283px;
  top: 291px;
  width: 44px;
  display: flex;
  flex-direction: column;
  gap: 11px;
}
.float-top {
  height: 44px;
  background: #c0c0c0;
  display: flex;
  align-items: center;
  justify-content: center;
}
.float-top svg { width: 24px; height: 18px; }
.float-btn {
  height: 44px;
  background: #ff6600;
  color: #fff;
  font-size: 14px;
  line-height: 19px;
  padding-top: 0;
  text-align: center;
}
.float-qq { letter-spacing: 1.500px; }

/* horizontal scrollbar */
.hscroll {
  height: 16px;
  flex: none;
  display: flex;
  align-items: center;
  background: #f0f0f0;
  padding-left: 6px;
}
.harrow { width: 5px; height: 8px; }
.hthumb { width: 1296px; height: 13px; margin-left: 6px; margin-right: 25px; background: #c0c0c0; }

/* status bar */
.statusbar {
  height: 23px;
  flex: none;
  display: flex;
  align-items: center;
  padding-left: 9px;
  background: #ebe7d5;
  border-top: 1px solid #d8d5c6;
  white-space: nowrap;
}
.st-text { color: #666; }
.st-chev { width: 8px; height: 8px; margin-left: 30px; }
.news { margin-left: 6px; color: #111; text-decoration: underline; }
.st-spacer { flex: 1; }
.ie { font: 700 16px "Liberation Sans", sans-serif; fill: #1a8ad8; }
.zoom-val { margin-left: 6px; margin-right: 4px; font-family: "Open Sans", sans-serif; font-size: 13px; }

/* task bar */
.taskbar {
  height: 41px;
  flex: none;
  display: flex;
  align-items: center;
  background: #020a10;
  color: #fff;
}
.start { width: 48px; height: 100%; background: #000; display: flex; align-items: center; justify-content: center; }
.start svg { width: 16px; height: 16px; }
.cortana { width: 344px; height: 100%; background: #333; display: flex; align-items: center; padding-left: 11px; }
.cortana-ring { width: 19px; height: 19px; border: 2px solid #eee; border-radius: 50%; }
.cortana-text { margin-left: 6px; color: #9a9a9a; font-size: 13px; }
.mic { width: 14px; height: 22px; margin-left: auto; margin-right: 14px; }
.task { position: relative; width: 49px; height: 100%; display: flex; align-items: center; justify-content: center; }
.task-active { background: #333; margin-left: 1px; }
.task-open::after, .task-active::after {
  content: "";
  position: absolute;
  left: 4px;
  right: 4px;
  bottom: 0;
  height: 2px;
  background: #76b9ed;
}
.task-active::after { left: 0; right: 0; }
.tile { width: 24px; height: 24px; border-radius: 4px; background: #0c96ea; display: flex; align-items: center; justify-content: center; }
.tray-spacer { flex: 1; }
.tray-stack { display: flex; flex-direction: column; align-items: center; font-size: 13px; line-height: 19px; padding-top: 2px; font-family: "Liberation Sans", "Noto Sans CJK SC", sans-serif; }
.tray-ic { margin-left: 10px; }
.caret-up { width: 14px; height: 8px; margin-left: 17px; }
.batt { width: 18px; height: 16px; margin-left: 8px; }
.wifi { width: 16px; height: 16px; margin-left: 11px; }
.vol { width: 16px; height: 16px; margin-left: 4px; }
.kbd { width: 24px; height: 14px; margin-left: 8px; }
.ime { margin-left: 8px; font-size: 14px; font-weight: 700; }
.sogou { width: 16px; height: 16px; margin-left: 14px; }
.sogou-s { font: 700 11px "Liberation Sans", sans-serif; fill: #fff; }
.clock { margin-left: 10px; width: 72px; }
.notify { position: relative; width: 54px; height: 100%; display: flex; align-items: center; justify-content: center; }
.notify svg { width: 16px; height: 14px; margin-top: -3px; margin-right: 12px; }
.notify-badge {
  position: absolute;
  left: 19px;
  top: 14px;
  width: 19px;
  height: 19px;
  border-radius: 50%;
  background: #333;
  border: 1px solid #666;
  font: 700 12px/17px "Liberation Sans", sans-serif;
  text-align: center;
}
```
